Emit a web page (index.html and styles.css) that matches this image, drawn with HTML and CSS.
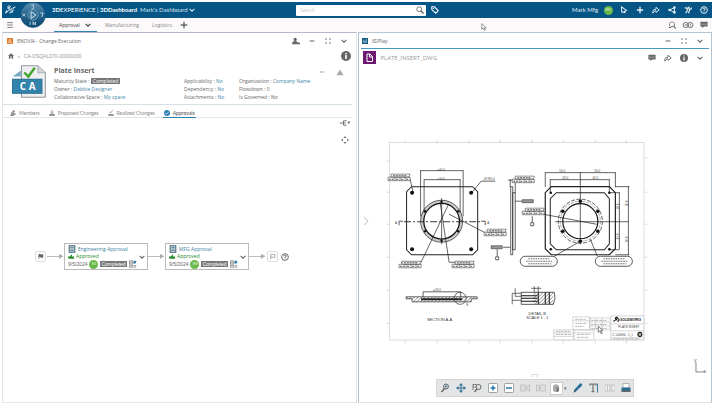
FILE: index.html
```html
<!DOCTYPE html>
<html lang="en">
<head>
<meta charset="utf-8">
<title>3DDashboard - Mark's Dashboard</title>
<link rel="stylesheet" href="styles.css">
</head>
<body>
<svg class="defs" aria-hidden="true">
  <symbol id="down" viewBox="0 0 10 10"><path d="M2 3.500l3 3 3-3" fill="none" stroke="currentColor" stroke-width="1.300"/></symbol>
  <symbol id="dash" viewBox="0 0 10 10"><path d="M2 5h6" stroke="currentColor" stroke-width="1.300"/></symbol>
  <symbol id="expand" viewBox="0 0 10 10"><path d="M1 3V1h2M7 1h2v2M9 7v2H7M3 9H1V7M2 2l1 1M8 2l-1 1M8 8l-1-1M2 8l1-1" fill="none" stroke="currentColor"/></symbol>
  <symbol id="plus" viewBox="0 0 10 10"><path d="M5 1v8M1 5h8" stroke="currentColor" stroke-width="1.700"/></symbol>
  <symbol id="share" viewBox="0 0 10 10"><path d="M1 9V7q0-3 4-3V1.500L9 5 5 8V6Q2.500 6 1 9z" fill="none" stroke="currentColor" stroke-width="1.100"/></symbol>
  <symbol id="chat" viewBox="0 0 10 10"><path d="M.5 1h9v6H5L3 9V7H.5z" fill="currentColor"/><path d="M2 4h6" stroke="#fff" stroke-dasharray="1.200"/></symbol>
  <symbol id="lens" viewBox="0 0 10 10"><circle cx="4" cy="4" r="3" fill="none" stroke="currentColor" stroke-width="1.100"/><path d="M6 6l3.500 3.500" stroke="currentColor" stroke-width="1.600"/></symbol>
  <symbol id="info" viewBox="0 0 10 10"><circle cx="5" cy="5" r="5" fill="currentColor"/><path d="M5 4v4M5 2v1.200" stroke="#fff" stroke-width="1.600"/></symbol>
  <symbol id="help" viewBox="0 0 10 10"><circle cx="5" cy="5" r="4.200" fill="none" stroke="currentColor" stroke-width="1.200"/><path d="M3.500 4q0-1.500 1.500-1.500T6.500 4Q6.500 5 5 5.500v.8M5 7v1" fill="none" stroke="currentColor" stroke-width="1.200"/></symbol>
  <symbol id="flag" viewBox="0 0 10 10"><path d="M2.500 9V2q2-1 3 0t3 0v4q-2 1-3 0t-3 0" fill="currentColor" stroke="currentColor" stroke-width=".8"/></symbol>
  <symbol id="flag-open" viewBox="0 0 10 10"><path d="M2.500 9V2q2-1 3 0t3 0v4q-2 1-3 0t-3 0" fill="none" stroke="currentColor" stroke-width="1.200"/></symbol>
  <symbol id="assign" viewBox="0 0 10 10"><circle cx="4" cy="3" r="2" fill="currentColor"/><path d="M0 9q0-4 4-4 3 0 3 2h3v2z" fill="currentColor"/></symbol>
  <symbol id="people" viewBox="0 0 10 10"><circle cx="6" cy="2.500" r="2" fill="currentColor"/><path d="M2 8q0-3 4-3t4 3zM0 10q0-3 3-3t4 3z" fill="currentColor"/><circle cx="3" cy="5" r="1.500" fill="currentColor"/></symbol>
  <symbol id="proposed" viewBox="0 0 10 10"><circle cx="5" cy="3" r="2" fill="none" stroke="currentColor"/><path d="M3 5.500h4M0 8.500l2-2h6l2 2v1H0z" fill="currentColor" stroke="currentColor" stroke-width=".6"/></symbol>
  <symbol id="realized" viewBox="0 0 10 10"><path d="M2 3l2 2 4-4.500" fill="none" stroke="currentColor" stroke-width="1.300"/><path d="M0 8.500l2-2h6l2 2v1H0z" fill="currentColor"/></symbol>
  <symbol id="sheet" viewBox="0 0 10 10"><path d="M1.500 1h7v8h-7z" fill="#dfe9ee" stroke="#3d6477" stroke-width="1.300"/><path d="M3 3h4M3 5h4M3 7h4" stroke="#3d6477"/></symbol>
  <symbol id="thumb" viewBox="0 0 10 10"><path d="M0 4h3l3-3 1 .5L6 4h4v4H3L0 7z" fill="#228b2b"/></symbol>
  <symbol id="tasks" viewBox="0 0 10 10"><path d="M.7 1h4v4h-4zM.7 6.500h4V9h-4z" fill="none" stroke="#777"/><path d="M5 3l2-2.500L9.500 2 7.500 5z" fill="#267da6"/><path d="M6 7h3M6 9h3M1.500 3h2" stroke="#777"/></symbol>
</svg>

<div class="app">
  <header class="topbar">
    <div class="brand">
      <svg class="ds" viewBox="0 0 22 20"><path d="M5 3q6-3 6 0t-6 3q4-1 4 2 0 4-8 8l3-6M14 7q-5 1-2 4t-3 5M21 4q-6 0-5 4t-3 8" fill="none" stroke="#fff" stroke-width="1.800"/></svg>
      <button class="compass" aria-label="Compass"><svg viewBox="0 0 54 54"><defs><linearGradient id="cg" x2="0" y2="1"><stop stop-color="#5d91b0"/><stop offset=".45" stop-color="#2a6790"/><stop offset="1" stop-color="#07456f"/></linearGradient></defs><circle cx="27" cy="27" r="26" fill="url(#cg)" stroke="#0b4a72"/><circle cx="27" cy="27" r="11" fill="#39749a" stroke="#91b6cb"/><path d="M23 20l10 7-10 7z" fill="none" stroke="#dbe9f1" stroke-width="2"/><path d="M24 6q6-1 3 4 5 3-3 5M5 24l6 6M5 30l6-6M42 23h6l-3 8M21 41v7M27 48v-7l5 7v-7" fill="none" stroke="#c5d9e4" stroke-width="2"/></svg></button>
      <h1><b>3D</b>EXPERIENCE | <b>3DDashboard</b></h1><button class="dash-name">Mark's Dashboard <svg class="i"><use href="#down"/></svg></button>
    </div>
    <div class="find">
      <label class="search"><input type="search" placeholder="Search" aria-label="Search"><svg class="i"><use href="#lens"/></svg></label>
      <button aria-label="Tags"><svg class="i" viewBox="0 0 10 10"><path d="M1 1h3.500L9 6 6 9 1 4.500z" fill="none" stroke="currentColor" stroke-width="1.300"/><circle cx="3" cy="3" r=".8" fill="currentColor"/></svg></button>
    </div>
    <div class="user">
      <span>Mark Mfg</span>
      <span class="cell"><span class="avatar">MM</span></span>
      <button class="cell" aria-label="Notifications"><svg class="i" viewBox="0 0 10 10"><path d="M2 1l6 4.500L3.500 8 2 7zM5 8.500l2-1" fill="none" stroke="currentColor" stroke-width="1.300"/></svg></button>
      <button class="cell" aria-label="Add"><svg class="i"><use href="#plus"/></svg></button>
      <button class="cell" aria-label="Share"><svg class="i"><use href="#share"/></svg></button>
      <button class="cell" aria-label="Network"><svg class="i" viewBox="0 0 10 10"><path d="M8 2L2 5l6 3V2" fill="none" stroke="currentColor" stroke-width="1.200"/><circle cx="2" cy="5" r="1.600" fill="currentColor"/><circle cx="8" cy="2" r="1.600" fill="currentColor"/><circle cx="8" cy="8" r="1.600" fill="currentColor"/></svg></button>
      <button class="cell" aria-label="Tools"><svg class="i" viewBox="0 0 10 10"><path d="M1 2l3 1v3L2 9M4 3l3-2M5.500 9L7 5l3-3M7 5L6 2.500" fill="none" stroke="currentColor" stroke-width="1.500"/></svg></button>
      <button class="cell" aria-label="Help"><svg class="i"><use href="#help"/></svg></button>
    </div>
  </header>

  <nav class="tabs">
    <button class="menu" aria-label="Menu"><svg class="i" viewBox="0 0 10 10"><path d="M1.500 2h7M1.500 5h7M1.500 8h7" stroke="currentColor"/></svg></button>
    <button class="tab on">Approval <svg class="i"><use href="#down"/></svg></button>
    <button class="tab">Manufacturing</button>
    <button class="tab">Logistics</button>
    <button aria-label="Add tab"><svg class="i"><use href="#plus"/></svg></button>
    <span class="grow"></span>
    <button class="cell" aria-label="Find"><svg class="i" viewBox="0 0 10 10"><path d="M3 7Q1 5 2 3t3-2 3 2-1 4H4" fill="none" stroke="currentColor"/><path d="M7 6l2.500 3.500M1 8h3" stroke="currentColor" stroke-width="1.300"/></svg></button>
    <button class="cell" aria-label="Compare"><svg class="i wide" viewBox="0 0 16 10"><circle cx="5" cy="5" r="3.500" fill="none" stroke="currentColor" stroke-width="1.200"/><circle cx="11" cy="5" r="3.500" fill="none" stroke="currentColor" stroke-width="1.200"/><path d="M4 4l2 2M6 4L4 6M11 3v4" stroke="currentColor"/></svg></button>
    <button class="cell" aria-label="Comments"><svg class="i"><use href="#chat"/></svg></button>
  </nav>
  <svg class="pointer" viewBox="0 0 10 14"><path d="M1 1v10l2.500-2.500L6 13l1.500-1-2-3.500H9z" fill="#fff" stroke="#555"/></svg>

  <main class="panels">
    <section class="panel">
      <div class="panel-head">
        <svg class="i" viewBox="0 0 10 10"><path d="M0 0h10v10H0z" fill="#e27c2d"/><path d="M2 8l3-6 1 4 2 2H4" fill="none" stroke="#fff"/></svg>
        <h2>ENOVIA - Change Execution</h2>
        <button class="cell" aria-label="Assign"><svg class="i"><use href="#assign"/></svg></button>
        <button class="cell" aria-label="Minimize"><svg class="i"><use href="#dash"/></svg></button>
        <button class="cell" aria-label="Maximize"><svg class="i s"><use href="#expand"/></svg></button>
        <button class="cell" aria-label="Options"><svg class="i"><use href="#down"/></svg></button>
      </div>
      <div class="crumbs">
        <svg class="i" viewBox="0 0 10 10"><path d="M0 5l5-4.500L10 5H8.500v4.500H6V6H4v3.500H1.500V5z" fill="#666"/></svg>
        <span>›</span><a href="#">CA-DSQAL070-00000030</a><span class="grow"></span>
        <button class="cell" aria-label="Information"><svg class="i big"><use href="#info"/></svg></button>
      </div>
      <div class="object">
        <svg class="badge" viewBox="0 0 100 100"><path d="M28 2h48l22 21v72H28z" fill="#eeeff0" stroke="#92999e" stroke-width="3"/><path d="M76 2v21h22" fill="#d2d5d7" stroke="#92999e" stroke-width="2"/><path d="M2 34l24-18v18z" fill="#75a9c4"/><path d="M1 42h87v41H1z" fill="#3283ab" stroke="#236b91" stroke-width="3"/><path d="M36 22l12 12 19-26" fill="none" stroke="#41a52c" stroke-width="7"/><text x="46" y="73" text-anchor="middle" font-size="29" font-weight="700" fill="#fff">C A</text></svg>
        <div class="facts">
          <h3>Plate Insert</h3>
          <p>Maturity State : <span class="state">Completed</span></p><p>Applicability : <a href="#">No</a></p><p>Organization : <a href="#">Company Name</a></p>
          <p>Owner : <a href="#">Debbie Designer</a></p><p>Dependency : <a href="#">No</a></p><p>Flowdown : 0</p>
          <p>Collaborative Space : <a href="#">My space</a></p><p>Attachments : <a href="#">No</a></p><p>Is Governed : No</p>
        </div>
        <div class="object-tools"><svg class="i"><use href="#dash"/></svg><svg class="i" viewBox="0 0 10 10"><path d="M5 2l4.500 7H.5z" fill="#aaa"/></svg></div>
      </div>
      <div class="subtabs">
        <button><svg class="i"><use href="#people"/></svg>Members</button>
        <button><svg class="i"><use href="#proposed"/></svg>Proposed Changes</button>
        <button><svg class="i"><use href="#realized"/></svg>Realized Changes</button>
        <button class="on"><svg class="i" viewBox="0 0 10 10"><circle cx="5" cy="5" r="5" fill="#2c7fb5"/><path d="M2 5l2 2 4-4" fill="none" stroke="#fff" stroke-width="1.300"/></svg>Approvals</button>
      </div>
      <div class="canvas-tools">
        <button aria-label="Layout"><svg class="i wide" viewBox="0 0 16 10"><path d="M1 5h8M6 2v6M6 2h4M6 8h4" fill="none" stroke="currentColor" stroke-width="1.400"/><path d="M11 3h4l-2 3.500z" fill="currentColor"/></svg></button>
        <button aria-label="Fit"><svg class="i" viewBox="0 0 10 10"><path d="M5 0l2 2.500H3zM5 10l2-2.500H3zM0 5l2.500-2v4zM10 5L7.500 3v4z" fill="currentColor"/></svg></button>
      </div>
      <div class="route">
        <span class="end"><svg class="i"><use href="#flag"/></svg></span>
        <span class="link"></span>
        <article class="step">
          <div><h4><svg class="i"><use href="#sheet"/></svg>Engineering Approval</h4>
          <p class="ok"><svg class="i s"><use href="#thumb"/></svg>Approved</p>
          <p class="meta">9/5/2024 <span class="avatar">ED</span><span class="state">Completed</span><svg class="i"><use href="#tasks"/></svg></p></div>
          <button aria-label="Engineering Approval options"><svg class="i"><use href="#down"/></svg></button>
        </article>
        <span class="link"></span>
        <article class="step">
          <div><h4><svg class="i"><use href="#sheet"/></svg>MFG Approval</h4>
          <p class="ok"><svg class="i s"><use href="#thumb"/></svg>Approved</p>
          <p class="meta">9/5/2024 <span class="avatar">MM</span><span class="state">Completed</span><svg class="i"><use href="#tasks"/></svg></p></div>
          <button aria-label="MFG Approval options"><svg class="i"><use href="#down"/></svg></button>
        </article>
        <span class="link"></span>
        <span class="end pale"><svg class="i"><use href="#flag-open"/></svg></span>
        <svg class="i"><use href="#help"/></svg>
      </div>
    </section>

    <section class="panel viewer">
      <div class="panel-head">
        <svg class="i" viewBox="0 0 10 10"><path d="M0 0h10v10H0z" fill="#165b82"/><path d="M3 8V3M5 8V5M7 8V2" stroke="#d2e4ee" stroke-width="1.200"/></svg>
        <h2>3DPlay</h2>
        <button class="cell" aria-label="Minimize"><svg class="i"><use href="#dash"/></svg></button>
        <button class="cell" aria-label="Maximize"><svg class="i s"><use href="#expand"/></svg></button>
        <button class="cell" aria-label="Options"><svg class="i"><use href="#down"/></svg></button>
      </div>
      <div class="doc">
        <svg class="doc-icon" viewBox="0 0 26 26"><path d="M0 0h26v26H0z" fill="#6c1870"/><path d="M8 6h6l5 5v10H8zM13 6v6h6" fill="none" stroke="#fff" stroke-width="2"/></svg>
        <h2>PLATE_INSERT_DWG</h2>
        <button class="cell" aria-label="Comment"><svg class="i"><use href="#chat"/></svg></button>
        <button class="cell" aria-label="Share document"><svg class="i"><use href="#share"/></svg></button>
        <button class="cell" aria-label="Document information"><svg class="i"><use href="#info"/></svg></button>
        <button class="cell" aria-label="More"><svg class="i"><use href="#down"/></svg></button>
      </div>
      <svg class="sheet" viewBox="359 66 352 311" role="img" aria-label="Plate insert drawing">
        <defs>
          <pattern id="hatch" width="2.500" height="2.500" patternUnits="userSpaceOnUse" patternTransform="rotate(45)"><path d="M0 0v3" stroke="#444" stroke-width=".9"/></pattern>
          <g id="tag"><path d="M3 0h19l-1 3H3zM0 3h22v3.500H0zM7 3v3.500M12 3v3.500M17 3v3.500" fill="#fff" stroke="#444" stroke-width=".6"/><path d="M5 1.500h14M1 5h5M8 5h3M13 5h3M18 5h3" stroke="#555" stroke-dasharray="2 .8"/></g>
          <g id="balloon"><rect width="37" height="10" rx="5" fill="#fff" stroke="#333" stroke-width=".8"/><path d="M8 2.500h21M6 5h26M8 7.500h23" stroke="#666" stroke-width=".9" stroke-dasharray="1.500 .8 2 .6"/></g>
        </defs>
        <path d="M389.500 142.500h254v197h-254z" fill="#fff" stroke="#ddd"/>
        <path d="M405 143v-3M437 143v-3M469 143v-3M500 143v-3M532 143v-3M563 143v-3M595 143v-3M626 143v-3M405 340v3M437 340v3M469 340v3M500 340v3M532 340v3M563 340v3M595 340v3M626 340v3M389 161h-3M389 192h-3M389 224h-3M389 257h-3M389 290h-3M389 323h-3M644 158h3M644 192h3M644 224h3M644 257h3M644 290h3M644 323h3" stroke="#ccc" stroke-width=".7"/>
        <path d="M364 217l4 4-4 4" fill="#fff" stroke="#ccc"/>
        <g fill="none" stroke="#222" stroke-width=".7">
          <path d="M411.500 186.500h61l5 5v58l-5 5h-61l-5-5v-58z" stroke-width="1"/>
          <circle cx="441.500" cy="221" r="19.500" stroke="#ccc" stroke-width="3"/>
          <circle cx="441.500" cy="221" r="21"/><circle cx="441.500" cy="221" r="17.800" stroke="#111" stroke-width="1.300"/>
          <path d="M420.500 170.500h42.500M420.500 170v46M463 170v46M424 179.500h36M424 179v34M460 179v34M441.500 198v46"/>
          <path d="M404 221.500h76" stroke-width=".9" stroke-dasharray="7 2 2 2"/><path d="M399 225v-4h4M485 225v-4h-4" stroke="#111"/>
          <path d="M388 179h22l3 13M495 181h-14l-9 11M448 205l-27 57h-20M440 202l9 60h24M449 214l37 19"/>
          <path d="M510.500 186.500h2v68h-2zM512.500 192.500h2.500v57h-2.500zM510 179v8M515 179v14M508 180h7M515 201h7M503 247h7M497 249v7"/>
          <path d="M495.500 256.500h3v3h-3z"/>
          <path d="M551 186.500h58l6 6v56l-6 6h-58l-6-6v-56z" stroke-width="1.200"/>
          <path d="M556 192.500h48l5 6v45l-5 6h-48l-6-6v-45z" stroke-width="1"/>
          <circle cx="580" cy="221" r="22" stroke-dasharray="4 1.500"/><circle cx="580" cy="221" r="20" stroke="#888" stroke-dasharray="3 1"/><circle cx="580" cy="221" r="17.500" stroke="#111" stroke-width="1.200"/>
          <path d="M545 172.500h70M545 172v15M615 172v15M580 172v72M550 179.500h59M550 179v13M609 179v13M619 192v57M609 192.500h10M609 249.500h10M628 186v69M615 186.500h14M615 254.500h14M555 221.500h73M543 214l53 10M554 256l26-15M597 256l-7-17"/>
          <path d="M532 216v6M530.500 222.500h3v3h-3z"/>
        </g>
        <g fill="#111"><circle cx="412" cy="192.500" r="2"/><circle cx="471" cy="192.500" r="2"/><circle cx="412" cy="249" r="2"/><circle cx="471" cy="249" r="2"/>
          <circle cx="550.500" cy="192.500" r="1.300"/><circle cx="609" cy="192.500" r="1.300"/><circle cx="550.500" cy="249" r="1.300"/><circle cx="609" cy="249" r="1.300"/>
          <circle cx="580" cy="201" r="1.800"/><circle cx="580" cy="241" r="1.800"/><circle cx="562.500" cy="211" r="1.800"/><circle cx="597.500" cy="211" r="1.800"/><circle cx="562.500" cy="231" r="1.800"/><circle cx="597.500" cy="231" r="1.800"/>
          <circle cx="441.500" cy="201.500" r="1.200"/><circle cx="441.500" cy="240.500" r="1.200"/><circle cx="425" cy="211" r="1.200"/><circle cx="458" cy="211" r="1.200"/><circle cx="425" cy="231" r="1.200"/><circle cx="458" cy="231" r="1.200"/></g>
        <use href="#tag" x="388" y="174"/><use href="#tag" x="399" y="261"/><use href="#tag" x="452" y="261"/><use href="#tag" x="484" y="229"/><use href="#tag" x="512" y="176"/><use href="#tag" x="522" y="208"/>
        <path d="M522 199.500h11v3h-11zM491 245.500h11v3h-11z" fill="#999" stroke="#333" stroke-width=".6"/>
        <g class="note" text-anchor="middle"><text x="441" y="171">⌀60.0</text><text x="441" y="180">⌀50.0</text><text x="489" y="180">4X R5.0</text><text x="562" y="172">50.0</text><text x="597" y="172">50.0</text><text x="565" y="179">42.0</text><text x="595" y="179">42.0</text><text x="396" y="224">A</text><text x="488" y="224">A</text>
          <text transform="translate(619 206) rotate(-90)">42.0</text><text transform="translate(619 236) rotate(-90)">42.0</text><text transform="translate(628 203) rotate(-90)">50.0</text><text transform="translate(628 239) rotate(-90)">50.0</text><text x="437" y="291">⌀53.0</text><text x="467" y="306">B</text></g>
        <use href="#balloon" x="520" y="256"/><use href="#balloon" x="595" y="256"/>
        <path d="M406 296.500h71v2h-6v3h-59v-3h-6z" fill="url(#hatch)" stroke="#222" stroke-width=".7"/><path d="M421 298h41v2h-41z" fill="#222"/><path d="M423 297v-5.500h37.500v5.500" fill="none" stroke="#222" stroke-width=".7"/><circle cx="460" cy="298" r="6" fill="none" stroke="#333" stroke-width=".7"/>
        <path d="M521 292h33q2 6-1 12h-32z" fill="#fff" stroke="#333" stroke-width=".8"/><path d="M533 292h20v12h-20z" fill="url(#hatch)"/><path d="M521 295.500h16M521 298h16M521 301h16M538 292v12M545 292v12M549 292v12" stroke="#111"/><path d="M512 293v11M512 293h9M512 300h9M515 288v8h6M534 292v-6M538 292v-6M531 288h10" fill="none" stroke="#333" stroke-width=".7"/>
        <g class="caption" text-anchor="middle"><text x="439.500" y="321">SECTION A-A</text><text x="537" y="315">DETAIL B</text><text x="537" y="319">SCALE 1 : 1</text></g>
        <g fill="#fff" stroke="#bbb" stroke-width=".6"><path d="M572.500 316.500h17v13h-17zM589.500 317.500h20v12h-20zM572.500 320.500h17M595 318v11M602 318v11M589 321.500h20M589 325.500h20M553.500 329.500h20v10h-20zM573.500 329.500h20v10h-20zM553 332.500h40M553 336h20M610.500 315.500h33v24h-33zM610 323.500h33M610 330.500h33M610 337.500h33"/></g>
        <path d="M575 319h10M575 323h12M575 326h9M591 320h16M591 324h15M591 328h16M556 331h14M556 334h15M577 334h13M577 337h11M613 338.500h26" stroke="#999" stroke-width=".8" stroke-dasharray="2 .8 1 .6"/>
        <path d="M613 321l3-2q-2-1 0-2t0 3M617 321q3-1 1-3" fill="none" stroke="#111" stroke-width="1.100"/><text class="logo" x="620" y="321">SOLIDWORKS</text>
        <g class="note"><text x="618" y="328">PLATE INSERT</text><text x="612" y="336">C  104096 - 1_1</text></g><circle cx="639.500" cy="334" r="2" fill="#aaa" stroke="#111"/>
        <path d="M598 326v6l1.500-1.500 1.500 3 1-.5-1.500-3h2z" fill="#fff" stroke="#333" stroke-width=".6"/>
        <path d="M695.500 362v9.500h9" fill="none" stroke="#666" stroke-width=".8"/><g class="axis"><text x="693" y="363">Y</text><text x="703" y="373">x</text></g>
        <path d="M531 374h7l-1 2-2.500 1.500-2.500-1.500z" fill="#fff" stroke="#ccc" stroke-width=".7"/>
      </svg>
      <div class="toolbar">
        <button aria-label="Zoom"><svg viewBox="0 0 20 20"><circle cx="12" cy="7" r="5" fill="none" stroke="#666" stroke-width="2"/><path d="M9 11l-6 7" stroke="#666" stroke-width="3"/><path d="M12 4v6M9 7h6" stroke="#397496" stroke-width="1.500"/></svg></button>
        <button aria-label="Pan"><svg viewBox="0 0 20 20"><path d="M10 0l4 5h-3v4h4V6l5 4-5 4v-3h-4v4h3l-4 5-4-5h3v-4H5v3l-5-4 5-4v3h4V5H6z" fill="#326f94"/></svg></button>
        <button aria-label="Zoom area"><svg viewBox="0 0 20 20"><path d="M2 3v11M2 3h8M2 8h5" stroke="#666" stroke-width="2" stroke-dasharray="3 1"/><circle cx="13" cy="8" r="5" fill="none" stroke="#666" stroke-width="2"/><path d="M10 12l-5 6" stroke="#666" stroke-width="2.500"/></svg></button>
        <button aria-label="Zoom in"><svg viewBox="0 0 20 20"><rect x="1" y="1" width="18" height="18" rx="2" fill="#fff" stroke="#888" stroke-width="1.500"/><path d="M10 5v10M5 10h10" stroke="#2677a4" stroke-width="3"/></svg></button>
        <button aria-label="Zoom out"><svg viewBox="0 0 20 20"><rect x="1" y="1" width="18" height="18" rx="2" fill="#fff" stroke="#888" stroke-width="1.500"/><path d="M4 10h12" stroke="#2677a4" stroke-width="3"/></svg></button>
        <button aria-label="Previous view"><svg viewBox="0 0 20 20"><path d="M1 4h11v12H1zM19 3l-8 7 8 7z" fill="#ddd" stroke="#bbb" stroke-width="1.500"/></svg></button>
        <button aria-label="Next view"><svg viewBox="0 0 20 20"><path d="M7 4h12v12H7zM1 3l9 7-9 7z" fill="#ddd" stroke="#bbb" stroke-width="1.500"/></svg></button>
        <button class="picked" aria-label="Display mode"><svg viewBox="0 0 20 20"><path d="M4 6q6-7 12 0v10q-6 4-12 0z" fill="#aaa"/><path d="M11 9h5v7q-2 2-5 2z" fill="#777"/></svg></button><span class="caret">▾</span>
        <button aria-label="Markup"><svg viewBox="0 0 20 20"><path d="M15 0l4 4L7 16l-6 3 2-6z" fill="#286f98"/><path d="M1 19l2-5 3 3z" fill="#555"/></svg></button>
        <button aria-label="Text"><svg viewBox="0 0 20 20"><path d="M2 5V2h12v3M8 2v15M5 17h6" fill="none" stroke="#777" stroke-width="2.500"/><path d="M17 1v18" stroke="#397da2" stroke-width="2"/></svg></button>
        <button aria-label="Measure"><svg viewBox="0 0 20 20"><path d="M0 4h20v12H0zM5 4v12M14 4v12M8 7h4l-3 6h3" fill="#eee" stroke="#bbb" stroke-width="1.500"/></svg></button>
        <button aria-label="Print"><svg viewBox="0 0 20 20"><path d="M4 1h12v9H4z" fill="#fff" stroke="#777"/><path d="M1 9h18v7H1z" fill="#286f98"/><path d="M1 15h18v3H1z" fill="#666"/></svg></button>
      </div>
    </section>
  </main>
</div>
</body>
</html>
```
FILE: styles.css
```css
* { box-sizing: border-box; }
body { margin: 0; padding: 2px 7px 16px 2px; background: #fff; color: #666; font: 5px/8px "Open Sans", "Noto Sans", sans-serif; }
h1, h2, h3, h4, p { margin: 0; font: inherit; }
button { border: 0; padding: 0; background: none; color: inherit; font: inherit; display: flex; align-items: center; justify-content: center; }
a { color: #4388aa; text-decoration: none; }
svg { display: block; flex: none; }
.defs { position: absolute; width: 0; height: 0; }
.i { width: 8px; height: 8px; }
.i.s { width: 6px; height: 6px; }
.i.big { width: 10px; height: 10px; }
.i.wide { width: 12px; }
.cell { width: 16px; flex: none; display: flex; justify-content: center; align-items: center; }
.grow { flex: 1; }

.app { position: relative; display: flex; flex-direction: column; min-height: calc(100vh - 18px); }
.topbar { display: grid; grid-template-columns: 294fr 146fr 270fr; align-items: center; height: 16px; background: #055686; color: #fff; font: 6px/8px Lato, sans-serif; }
.brand { display: flex; align-items: center; padding-left: 3px; }
.brand .ds { width: 11px; height: 10px; margin-right: 36px; }
.dash-name { color: #d5e5ef; margin-left: 3px; }
.compass { position: absolute; left: 18px; top: 0; z-index: 1; }
.compass svg { width: 26px; height: 26px; }
.find { display: flex; align-items: center; gap: 5px; }
.search { display: flex; align-items: center; width: 130px; height: 11px; padding: 0 2px; background: #fff; color: #666; border-radius: 1px; }
.search input { flex: 1; min-width: 0; border: 0; outline: 0; padding: 0 2px; background: none; font: inherit; font-size: 5px; }
.search input::placeholder { color: #ccc; }
.user { display: flex; align-items: center; justify-content: flex-end; color: #e5eff5; }
.user > span:first-child { margin-right: 2px; }
.avatar { display: flex; align-items: center; justify-content: center; flex: none; width: 9px; height: 9px; border-radius: 50%; background: #69b84a; color: #e5f5df; font-size: 3px; }

.tabs { display: flex; align-items: stretch; height: 14px; background: #fcf9fb; }
.tabs .menu { width: 16px; margin-right: 36px; }
.tab { padding: 0 5px; margin-right: 3px; color: #888; gap: 4px; border-bottom: 1px solid transparent; }
.tab.on { color: #444; border-color: #2e83b5; }
.pointer { position: absolute; left: 479px; top: 21px; width: 6px; height: 8px; }

.panels { flex: 1; display: grid; grid-template-columns: 1fr 1fr; gap: 1px; }
.panel { display: flex; flex-direction: column; min-width: 0; border: 1px solid #e5e5e8; border-top-color: #b3bbcb; }
.viewer { border-color: #b5c6d2; border-bottom-color: #e3e3e3; }
.panel-head { display: flex; align-items: center; height: 16px; padding: 0 4px; }
.panel-head > .i { width: 6px; height: 6px; margin-right: 4px; }
.panel-head h2 { flex: 1; }
.viewer .panel-head, .doc { padding: 0 3px; }
.viewer .panel-head { border-bottom: 1px solid #4a98c4; margin: 0 2px; padding: 0 1px; }
.crumbs { display: flex; align-items: center; gap: 4px; height: 14px; padding: 0 2px 0 5px; font-family: "Liberation Sans", sans-serif; }
.crumbs > .i { width: 6px; height: 6px; }
.crumbs a { color: #999; }

.object { display: flex; align-items: flex-start; gap: 8px; padding: 2px 4px 0 9px; height: 41px; }
.badge { width: 34px; height: 34px; font-family: "Open Sans", sans-serif; }
.facts { flex: 1; min-width: 0; display: grid; grid-template-columns: 130px 55px 1fr; white-space: nowrap; }
.facts h3 { grid-column: 1 / -1; font-size: 7px; line-height: 12px; font-weight: 700; }
.facts p { height: 8px; }
.state { background: #777; color: #fff; padding: 0 2px; line-height: 6px; display: inline-block; }
.object-tools { display: flex; gap: 10px; padding: 3px 8px 0 0; color: #aaa; }

.subtabs { display: flex; height: 14px; gap: 7px; padding-left: 6px; margin: 0 4px 0 0; border-top: 1px solid #d5e1e7; border-bottom: 1px solid #e5e5e5; font-family: Lato, sans-serif; }
.subtabs button { gap: 3px; height: 13px; padding: 3px 1px 0; color: #888; border-bottom: 1px solid transparent; }
.subtabs .i { width: 6px; height: 6px; }
.subtabs .on { color: #444; border-color: #2c7fb5; }
.canvas-tools { display: flex; flex-direction: column; align-items: center; gap: 9px; align-self: flex-end; width: 22px; padding-top: 1px; color: #777; }

.route { display: flex; align-items: center; padding: 99px 0 0 32px; }
.end { display: flex; align-items: center; justify-content: center; width: 11px; height: 11px; border: 1px solid #ddd; border-radius: 2px; margin-right: 1px; }
.end .i { width: 7px; height: 7px; }
.pale { color: #999; margin: 0 3px 0 1px; }
.link { position: relative; flex: none; width: 16px; height: 1px; margin-right: 1px; background: #bbb; }
.link::after { content: ""; position: absolute; right: 0; top: -2px; border-left: 4px solid #aaa; border-top: 2px solid transparent; border-bottom: 3px solid transparent; }
.step { display: flex; align-items: center; justify-content: space-between; width: 84px; height: 27px; padding: 0 1px 0 3px; border: 1px solid #bbb; }
.step h4, .step p { display: flex; align-items: center; gap: 2px; line-height: 7px; }
.step h4 { color: #3c7f9f; }
.step .ok { color: #228b2b; }
.step .meta { height: 8px; font-family: "Liberation Sans", sans-serif; }
.step .state { padding: 0 1px; }

.doc { display: flex; align-items: center; height: 17px; }
.doc-icon { width: 13px; height: 13px; margin: 0 5px 0 1px; }
.doc h2 { flex: 1; font-size: 6px; color: #999; }
.sheet { width: 100%; height: auto; font-family: "Liberation Sans", sans-serif; }
.note { font-size: 3px; fill: #444; }
.caption { font-size: 4px; fill: #333; }
.logo { font-size: 3px; font-style: italic; font-weight: 700; fill: #111; }
.axis { font-size: 5px; fill: #555; }
.toolbar { display: flex; align-items: center; align-self: center; gap: 6px; height: 18px; padding: 0 2px 0 3px; margin: 2px 0 5px; background: #e3e4e5; border: 1px solid #d3d3d3; }
.toolbar svg { width: 10px; height: 10px; }
.toolbar .picked { width: 13px; height: 13px; margin: 0 -2px; background: #fff; border: 1px solid #ccc; }
.caret { margin-left: -3px; }
```
